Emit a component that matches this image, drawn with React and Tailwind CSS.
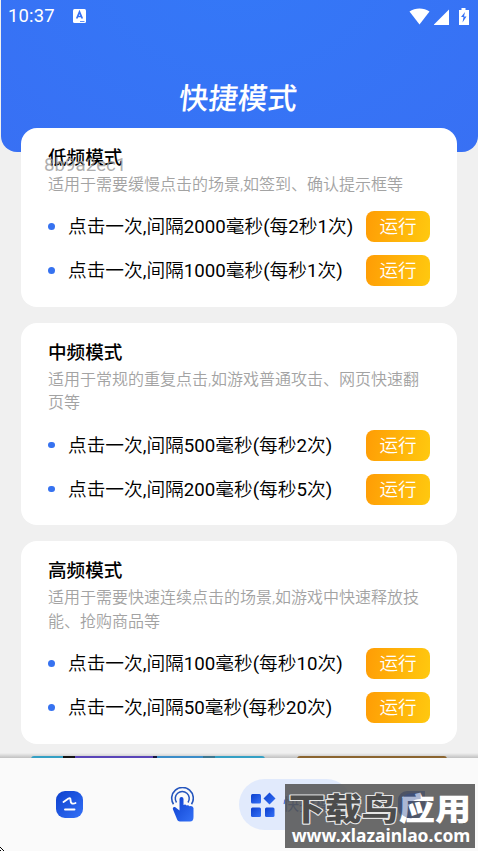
import React from "react";

const modes = [
    {
        title: "低频模式",
        lines: ["适用于需要缓慢点击的场景,如签到、确认提示框等"],
        actions: ["点击一次,间隔2000毫秒(每2秒1次)", "点击一次,间隔1000毫秒(每秒1次)"],
        tag: "8b9a2ec1",
    },
    {
        title: "中频模式",
        lines: ["适用于常规的重复点击,如游戏普通攻击、网页快速翻", "页等"],
        actions: ["点击一次,间隔500毫秒(每秒2次)", "点击一次,间隔200毫秒(每秒5次)"],
    },
    {
        title: "高频模式",
        lines: ["适用于需要快速连续点击的场景,如游戏中快速释放技", "能、抢购商品等"],
        actions: ["点击一次,间隔100毫秒(每秒10次)", "点击一次,间隔50毫秒(每秒20次)"],
    },
];

function StatusBar() {
    return (
        <div className="flex h-8 items-center pl-[7px] pr-[9px] text-white">
            <span className="text-[18.4px] leading-[34px] tracking-[0.2px]">10:37</span>
            <svg className="ml-[18px] h-[14px] w-[13px]" viewBox="0 0 13 14">
                <rect width="13" height="14" rx="1.5" fill="#fff" />
                <path d="M3.7 9.500 6.500 3 9.300 9.500M4.800 7.500h3.400" fill="none" stroke="#3672f6" strokeWidth="1.700" />
                <path d="M7 12.500h4.500" stroke="#3672f6" strokeWidth="0.8" />
            </svg>
            <svg className="ml-auto h-[17px] w-[60px]" viewBox="0 0 60 17" fill="#fff">
                <path d="M0.5 3.5C6-.6 15-.6 20.500 3.500L10.500 16.500Z" />
                <path d="M25 17V16.500L40 1.500V17Z" />
                <path d="M50 2h2.500V0h4v2H60v15H50Z" />
                <path d="m56 4-4 5h2.500l-1 5.500 4-6H55Z" fill="#3672f6" />
            </svg>
        </div>
    );
}

// Chinese runs in DemiLight, digits and punctuation in Roboto Regular
function ActionLabel({ text }) {
    return (
        <span className="ml-[13.5px] pt-px text-[18.7px] font-[350]">
            {text.split(/([\d,()]+)/).map((part, i) =>
                i % 2 ? <span key={i} className="font-normal">{part}</span> : part
            )}
        </span>
    );
}

function ModeCard({ mode }) {
    return (
        <section className="relative shrink-0 rounded-[16px] bg-white pb-[14px] pl-[27px] pr-[27px] pt-[18px]">
            <h2 className="text-[18.6px] font-medium leading-6">{mode.title}</h2>
            {mode.tag && (
                <span className="absolute left-[23px] top-[25px] text-[18.7px] leading-6 text-[#999]/80">{mode.tag}</span>
            )}
            <div className="mt-[3px] whitespace-nowrap text-[16px] font-[350] leading-[23.7px] text-[#a3a3a3]">
                {mode.lines.map((line) => (
                    <p key={line}>{line}</p>
                ))}
            </div>
            <ul className="mt-2">
                {mode.actions.map((action) => (
                    <li key={action} className="flex h-11 items-center whitespace-nowrap">
                        <span className="size-[6.5px] rounded-full bg-[#3672f0]" />
                        <ActionLabel text={action} />
                        <button className="ml-auto h-[31px] w-16 rounded-[8px] bg-linear-100 from-[#ff9c05] to-[#ffc90f] pt-px text-[18.6px] font-[350] leading-[30px] text-white">
                            运行
                        </button>
                    </li>
                ))}
            </ul>
        </section>
    );
}

function Watermark() {
    return (
        <div className="absolute left-[285px] top-[25.5px] h-[64.5px] w-[190px] bg-[#555]/88">
            <svg className="h-full w-full" viewBox="0 0 190 65" strokeLinejoin="round" paintOrder="stroke">
                <g fontWeight="900" fontSize="31">
                    <text x="3" y="36" textLength="110" lengthAdjust="spacingAndGlyphs" fill="#4c4c4c" stroke="#e5e5e5" strokeWidth="2.2">下载鸟</text>
                    <text x="114" y="36" textLength="73" lengthAdjust="spacingAndGlyphs" fill="#fff">应用</text>
                </g>
                <text x="6" y="58" fontSize="18" textLength="180" lengthAdjust="spacingAndGlyphs" fontFamily="Noto Sans" fontWeight="700" fill="#fff">www.xlazainlao.com</text>
                <path d="M115 27Q113 9 130 9h6v6q-12 0-12 12 0 4 3 8-10-1-12-8Z" fill="#2d4a94" opacity=".4" />
            </svg>
        </div>
    );
}

function BottomNav() {
    return (
        <nav className="relative flex h-[93px] shrink-0 items-start bg-[#fafafa] pl-14">
            <svg className="mt-[33px] size-[27px]" viewBox="0 0 27 27" fill="none" stroke="#fff" strokeLinecap="round" strokeLinejoin="round">
                <defs>
                    <linearGradient id="navBlue" x2="1" y2="1">
                        <stop stopColor="#0c3fcd" />
                        <stop offset="1" stopColor="#3471f7" />
                    </linearGradient>
                </defs>
                <rect width="27" height="27" rx="9" fill="url(#navBlue)" stroke="none" />
                <path d="M7.5 11 12.500 7.500Q14.500 6.500 14.500 9T16 12.500Q18 13 19.500 12" strokeWidth="1.9" />
                <path d="M9 18.5h9.500" strokeWidth="1.9" />
            </svg>
            <svg className="ml-[87px] mt-[29px] h-[35px] w-6" viewBox="0 0 24 35" fill="none">
                <path d="M3.5 17.200A10.800 10.800 0 1 1 21.500 17.200" stroke="#2455bd" strokeWidth="1.6" />
                <path d="M6.5 15.500A7 7 0 1 1 18 15.500" stroke="#2455bd" strokeWidth="1.5" />
                <path d="M9.500 12q0-2 2-2t2 2v6q2-1 3 .5 2-1 3 .8 3-.8 4 1.700v9q0 4.500-3.500 4.500H10q-2.500 0-3.500-3.500L3 22.500q-.8-2.800 2-2.500l4.500 3.500Z" fill="url(#navBlue)" />
            </svg>
            <div className="ml-[45px] mt-[21px] flex h-[51px] w-[113px] items-center rounded-full bg-[#e1eafc] pl-3 text-[#2857c5]">
                <svg className="size-6 shrink-0 overflow-visible" viewBox="0 0 24 24" fill="url(#navBlue)">
                    <rect y="1" width="10" height="9.500" rx="1.5" />
                    <path d="m18.500-.5 6 6-6 6-6-6Z" />
                    <rect y="14.500" width="10" height="9.500" rx="1.5" />
                    <rect x="14" y="14.500" width="9.500" height="9.500" rx="1.5" />
                </svg>
                <span className="ml-2 whitespace-nowrap text-[16px]">快捷模式</span>
            </div>
            <svg className="ml-[46px] mt-[33px] size-[27px]" viewBox="0 0 27 27">
                <path d="M9 0h18v18a9 9 0 0 1-9 9H9a9 9 0 0 1-9-9V9a9 9 0 0 1 9-9Z" fill="url(#navBlue)" />
            </svg>
            <Watermark />
            <svg className="absolute bottom-0 left-0 size-1" viewBox="0 0 4 4" shapeRendering="crispEdges">
                <path d="M0 0h1v1H0ZM1 1h1v1H1ZM2 2h1v1H2ZM3 3h1v1H3ZM0 3h1v1H0Z" />
            </svg>
        </nav>
    );
}

export default function App() {
    return (
        <div className="flex h-[851px] w-[478px] flex-col overflow-hidden bg-[#f0f0f0] font-[Roboto,'Noto_Sans_CJK_SC',sans-serif] text-black">
            <header className="ml-px h-[152px] shrink-0 rounded-b-[16px] bg-radial-[at_50%_-20%] from-[#3478f7] to-[#3870f4]">
                <StatusBar />
                <h1 className="mr-[3px] mt-[47px] -skew-x-6 text-center text-[29.5px] font-medium leading-10 text-white">快捷模式</h1>
            </header>
            <main className="z-10 -mt-6 flex min-h-0 flex-1 flex-col gap-4 overflow-hidden bg-[linear-gradient(#0000_calc(100%-5px),#0003)] px-[21px]">
                {modes.map((mode) => (
                    <ModeCard key={mode.title} mode={mode} />
                ))}
                {/* Top edge of the banners that scroll under the nav */}
                <div className="-mt-[3.4px] flex h-20 shrink-0 gap-8 px-[10px]">
                    <div className="flex w-[235px] rounded-[3px] bg-[#35a0c4]">
                        <div className="ml-[32px] w-3 bg-[#151515]" />
                        <div className="w-[78px] bg-[#5a45b8]" />
                        <div className="w-1 bg-[#151540]" />
                        <div className="w-[46px] bg-[#3b8cc8]" />
                        <div className="w-3 bg-[#3c7791]" />
                    </div>
                    <div className="w-[151px] rounded-[3px] bg-[#8b6530]" />
                </div>
            </main>
            <BottomNav />
        </div>
    );
}
